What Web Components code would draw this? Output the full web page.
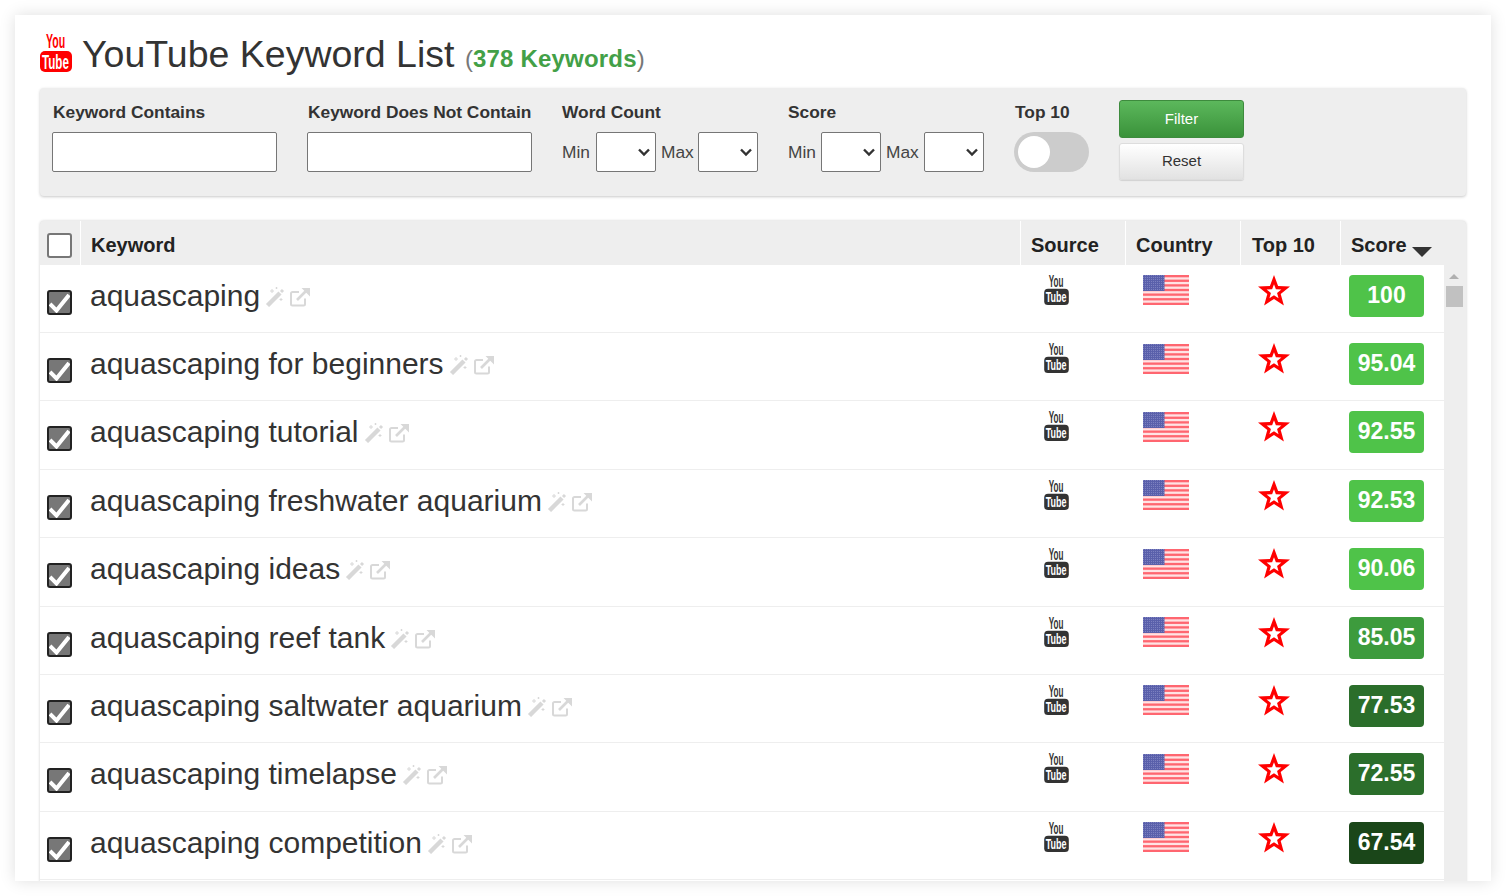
<!DOCTYPE html>
<html>
<head>
<meta charset="utf-8">
<title>YouTube Keyword List</title>
<style>
html, body { margin: 0; height: 100%; overflow: hidden; background: #fff; font-family: "Liberation Sans", Arial, sans-serif; color: #333; }
</style>
</head>
<body>
<kw-card>
    <kw-heading count="378 Keywords"></kw-heading>
    <kw-filter></kw-filter>
    <kw-table>
        <kw-row keyword="aquascaping" score="100" color="#4fc349"></kw-row>
        <kw-row keyword="aquascaping for beginners" score="95.04" color="#4fc349"></kw-row>
        <kw-row keyword="aquascaping tutorial" score="92.55" color="#4fc349"></kw-row>
        <kw-row keyword="aquascaping freshwater aquarium" score="92.53" color="#4fc349"></kw-row>
        <kw-row keyword="aquascaping ideas" score="90.06" color="#4fc349"></kw-row>
        <kw-row keyword="aquascaping reef tank" score="85.05" color="#3d9b3d"></kw-row>
        <kw-row keyword="aquascaping saltwater aquarium" score="77.53" color="#2b6e2b"></kw-row>
        <kw-row keyword="aquascaping timelapse" score="72.55" color="#2b6e2b"></kw-row>
        <kw-row keyword="aquascaping competition" score="67.54" color="#1a4619"></kw-row>
    </kw-table>
</kw-card>

<script>
// small helper so each class is just markup + styles
function shadow(el, html) {
    el.attachShadow({mode: 'open'});
    el.shadowRoot.innerHTML = html;
}

class KwCard extends HTMLElement {
    constructor() {
        super();
        shadow(this, `<style>
        :host { display: block; box-sizing: border-box; height: 866px; margin: 15px; padding: 15px 25px 0 25px;
            background: #fff; box-shadow: 0 0 15px rgba(0,0,0,.13); overflow: hidden; }
        </style><slot></slot>`);
    }
}

class YtLogo extends HTMLElement {
    connectedCallback() {
        const c = this.getAttribute('color') || '#333';
        shadow(this, `<style>
        :host { display: block; width: var(--w, 25px); height: var(--h, 30px); }
        svg { display: block; width: 100%; height: 100%; overflow: visible; }
        text { font-family: "Liberation Sans", Arial, sans-serif; font-weight: 700; font-size: 18.500px; }
        </style>
        <svg viewBox="0 0 32 39">
            <text transform="translate(6 15) scale(.57 1.100)" fill="${c}">You</text>
            <rect x="0" y="18" width="32" height="21" rx="5" fill="${c}"/>
            <text transform="translate(2 35.500) scale(.63 1.050)" fill="#fff">Tube</text>
        </svg>`);
    }
}

class KwHeading extends HTMLElement {
    connectedCallback() {
        shadow(this, `<style>
        :host { display: flex; align-items: center; gap: 10px; box-sizing: border-box; height: 58px; padding: 0 0 14px 0; }
        yt-logo { --w: 32px; --h: 39px; }
        h1 { margin: 6px 0 0; font-size: 37.500px; font-weight: 400; color: #333; line-height: 1; }
        small { font-size: 24px; color: #777; font-weight: 400; }
        b { color: #43a047; letter-spacing: .2px; }
        </style>
        <yt-logo color="#f00"></yt-logo>
        <h1>YouTube Keyword List <small>(<b>${this.getAttribute('count')}</b>)</small></h1>`);
    }
}

class KwRange extends HTMLElement {
    connectedCallback() {
        shadow(this, `<style>
        :host { display: block; width: 226px; }
        label { display: block; font-weight: 700; font-size: 17.330px; color: #333; line-height: 20px; margin-bottom: 10px; }
        div { display: flex; align-items: center; height: 40px; font-size: 17.330px; color: #444; }
        .min { width: var(--min, 34px); }
        .max { width: var(--max, 37px); }
        select { appearance: none; box-sizing: border-box; width: 60px; height: 40px; margin: 0 5px 0 0; border: 1px solid #767676; border-radius: 2px;
            background: #fff url("data:image/svg+xml,%3Csvg xmlns='http://www.w3.org/2000/svg' width='14' height='9'%3E%3Cpath d='M2 1.500L7 6.500l5-5' fill='none' stroke='%23333' stroke-width='2.400'/%3E%3C/svg%3E") no-repeat right 4px top 15px; }
        </style>
        <label>${this.getAttribute('label')}</label>
        <div><span class="min">Min</span><select></select><span class="max">Max</span><select></select></div>`);
    }
}

class KwFilter extends HTMLElement {
    constructor() {
        super();
        shadow(this, `<style>
        :host { display: flex; box-sizing: border-box; height: 108px; margin-top: 0; padding: 14px 0 0 12px; background: #eee;
            border-radius: 4px; box-shadow: 0 1px 3px rgba(0,0,0,.22); font-family: "Liberation Sans", Arial, sans-serif; }
        .txt { width: 255px; }
        label { display: block; padding-left: 1px; font-weight: 700; font-size: 17.330px; color: #333; line-height: 20px; margin-bottom: 10px; }
        input { display: block; box-sizing: border-box; width: 225px; height: 40px; margin: 0; background: #fff; border: 1px solid #767676; border-radius: 2px; }
        .top { width: 105px; }
        .switch { width: 75px; height: 40px; border-radius: 20px; background: #ccc; padding: 4px; box-sizing: border-box; }
        .switch i { display: block; width: 32px; height: 32px; border-radius: 50%; background: #fff; }
        .btns { display: flex; flex-direction: column; gap: 5px; width: 125px; margin-top: -2px; }
        button { box-sizing: border-box; width: 125px; font: 15px "Liberation Sans", Arial, sans-serif; padding: 0; border-radius: 3px; }
        .go { height: 38px; padding-bottom: 2px; color: #fff; border: 1px solid #3d8b3d; background: linear-gradient(#5cb85c, #3a923a); }
        .no { height: 37px; padding-bottom: 2px; color: #333; border: 1px solid #ddd; background: linear-gradient(#fff, #e2e2e2); box-shadow: 0 1px 1px rgba(0,0,0,.12); }
        kw-range + kw-range { --min: 33px; --max: 38px; }
        </style>
        <div class="txt"><label>Keyword Contains</label><input type="text"></div>
        <div class="txt"><label>Keyword Does Not Contain</label><input type="text"></div>
        <kw-range label="Word Count"></kw-range>
        <kw-range label="Score"></kw-range>
        <div class="top"><label>Top 10</label><div class="switch"><i></i></div></div>
        <div class="btns"><button class="go">Filter</button><button class="no">Reset</button></div>`);
    }
}

class KwTable extends HTMLElement {
    constructor() {
        super();
        shadow(this, `<style>
        :host { display: block; margin-top: 25px; border-radius: 4px; background: #eee; box-shadow: 0 0 3px rgba(0,0,0,.2); }
        header { display: grid; grid-template-columns: 41px 940px 105px 115px 100px 125px; height: 43.700px; }
        header div { box-sizing: border-box; padding-left: 10px; border-right: 1px solid #fff; font: 700 20px/48px "Liberation Sans", Arial, sans-serif; color: #222; white-space: nowrap; }
        header div:last-child { border-right: 0; }
        header div.t10 { padding-left: 11px; }
        header div div.all { width: 25px; height: 25px; box-sizing: border-box; margin: 12px 0 0 -3px; padding: 0; background: #fff; border: 2px solid #777; border-radius: 3px; }
        .caret { display: inline-block; border: 10px solid transparent; border-top: 10px solid #333; border-bottom: 0; vertical-align: -5px; }
        main { display: flex; min-height: 700px; }
        .rows { width: 1404px; background: #fff; }
        .bar { flex: 1; display: flex; flex-direction: column; align-items: center; padding-top: 9px; padding-left: 1px; padding-right: 3px; }
        .bar i { width: 0; border: 5px solid transparent; border-bottom: 5px solid #b0b0b0; border-top: 0; }
        .bar u { display: block; width: 17px; height: 21px; margin-top: 7px; background: #c1c1c1; }
        </style>
        <header>
            <div><div class="all"></div></div><div>Keyword</div><div>Source</div><div>Country</div><div class="t10">Top 10</div>
            <div>Score <span class="caret"></span></div>
        </header>
        <main><div class="rows"><slot></slot></div><div class="bar"><i></i><u></u></div></main>`);
    }
}

class UsFlag extends HTMLElement {
    constructor() {
        super();
        let stripes = '';
        for (let i = 0; i < 7; i++) stripes += `<rect y="${i * 4.62}" width="46" height="2.310" fill="#ff6670"/>`;
        shadow(this, `<style>
        :host { display: block; width: 46px; height: 30px; }
        svg { display: block; }
        </style>
        <svg width="46" height="30" viewBox="0 0 46 30">
            <defs><pattern id="st" width="2" height="2" patternUnits="userSpaceOnUse"><rect width="2" height="2" fill="#5a60ab"/><rect width="1" height="1" fill="#7c80c0"/></pattern></defs>
            <rect width="46" height="30" fill="#ffe3e4"/>${stripes}
            <rect width="21.500" height="16" fill="url(#st)"/>
        </svg>`);
    }
}

class KwRow extends HTMLElement {
    connectedCallback() {
        const kw = this.getAttribute('keyword');
        const star = 'M16 0L20.100 11.100 32 11.600 22.700 19 25.900 30.400 16 24 6.100 30.400 9.300 19 0 11.600 11.900 11.100z';
        shadow(this, `<style>
        :host { display: grid; grid-template-columns: 40px 940px 105px 115px 100px 1fr; box-sizing: border-box; height: 68.375px; border-bottom: 1px solid #eee; }
        .chk { box-sizing: border-box; width: 25px; height: 25px; margin: 25px 0 0 7px; border: 2px solid #222; border-radius: 3px; background: #777; overflow: hidden; }
        .chk svg { display: block; }
        .kw { display: flex; align-items: center; height: 34px; margin-top: 14px; padding-left: 10px; font-size: 30px; color: #333; white-space: nowrap; }
        .kw svg { margin: 2px 0 0 5px; flex: none; }
        .kw svg + svg { margin-left: 5px; }
        .src yt-logo { margin: 10px 0 0 24px; }
        .cty us-flag { margin: 10.500px 0 0 18px; }
        .top svg { display: block; margin: 10px 0 0 18px; }
        .sc { padding: 10px 0 0 9px; }
        .sc b { display: block; width: 75px; height: 42px; border-radius: 4px; color: #fff; text-align: center; font: 700 23px/40px "Liberation Sans", Arial, sans-serif; }
        </style>
        <div><div class="chk"><svg width="21" height="21" viewBox="0 0 21 21"><path d="M1 12l6.500 6.500L20 3" fill="none" stroke="#fff" stroke-width="4"/></svg></div></div>
        <div class="kw">${kw}
            <svg width="20" height="20" viewBox="0 0 20 20"><path d="M2.500 18.500L15 6" stroke="#d8d8d8" stroke-width="4.400"/><path d="M16 5l2-2" stroke="#d8d8d8" stroke-width="3"/><path d="M7 2v4M5 4h4M16 11v3M14.500 12.500h3M11.500 0v2M10.500 1h2" stroke="#d8d8d8" stroke-width="1"/></svg>
            <svg width="21" height="20" viewBox="0 0 21 20"><path d="M15 11.500V17a1.500 1.500 0 0 1-1.500 1.500h-11A1.500 1.500 0 0 1 1 17V6.500A1.500 1.500 0 0 1 2.500 5H9" fill="none" stroke="#d8d8d8" stroke-width="2"/><path d="M7 13L17 3" stroke="#d8d8d8" stroke-width="2.600"/><path d="M11.500 1H20v8.500z" fill="#d8d8d8"/></svg>
        </div>
        <div class="src"><yt-logo></yt-logo></div>
        <div class="cty"><us-flag></us-flag></div>
        <div class="top"><svg width="32" height="31" viewBox="0 0 32 31"><path d="${star}" fill="#f00"/><path d="${star}" fill="#fff" transform="translate(16 17) scale(.46) translate(-16 -17)"/></svg></div>
        <div class="sc"><b style="background:${this.getAttribute('color')}">${this.getAttribute('score')}</b></div>`);
    }
}

customElements.define('kw-card', KwCard);
customElements.define('yt-logo', YtLogo);
customElements.define('us-flag', UsFlag);
customElements.define('kw-heading', KwHeading);
customElements.define('kw-range', KwRange);
customElements.define('kw-filter', KwFilter);
customElements.define('kw-table', KwTable);
customElements.define('kw-row', KwRow);
</script>
</body>
</html>
